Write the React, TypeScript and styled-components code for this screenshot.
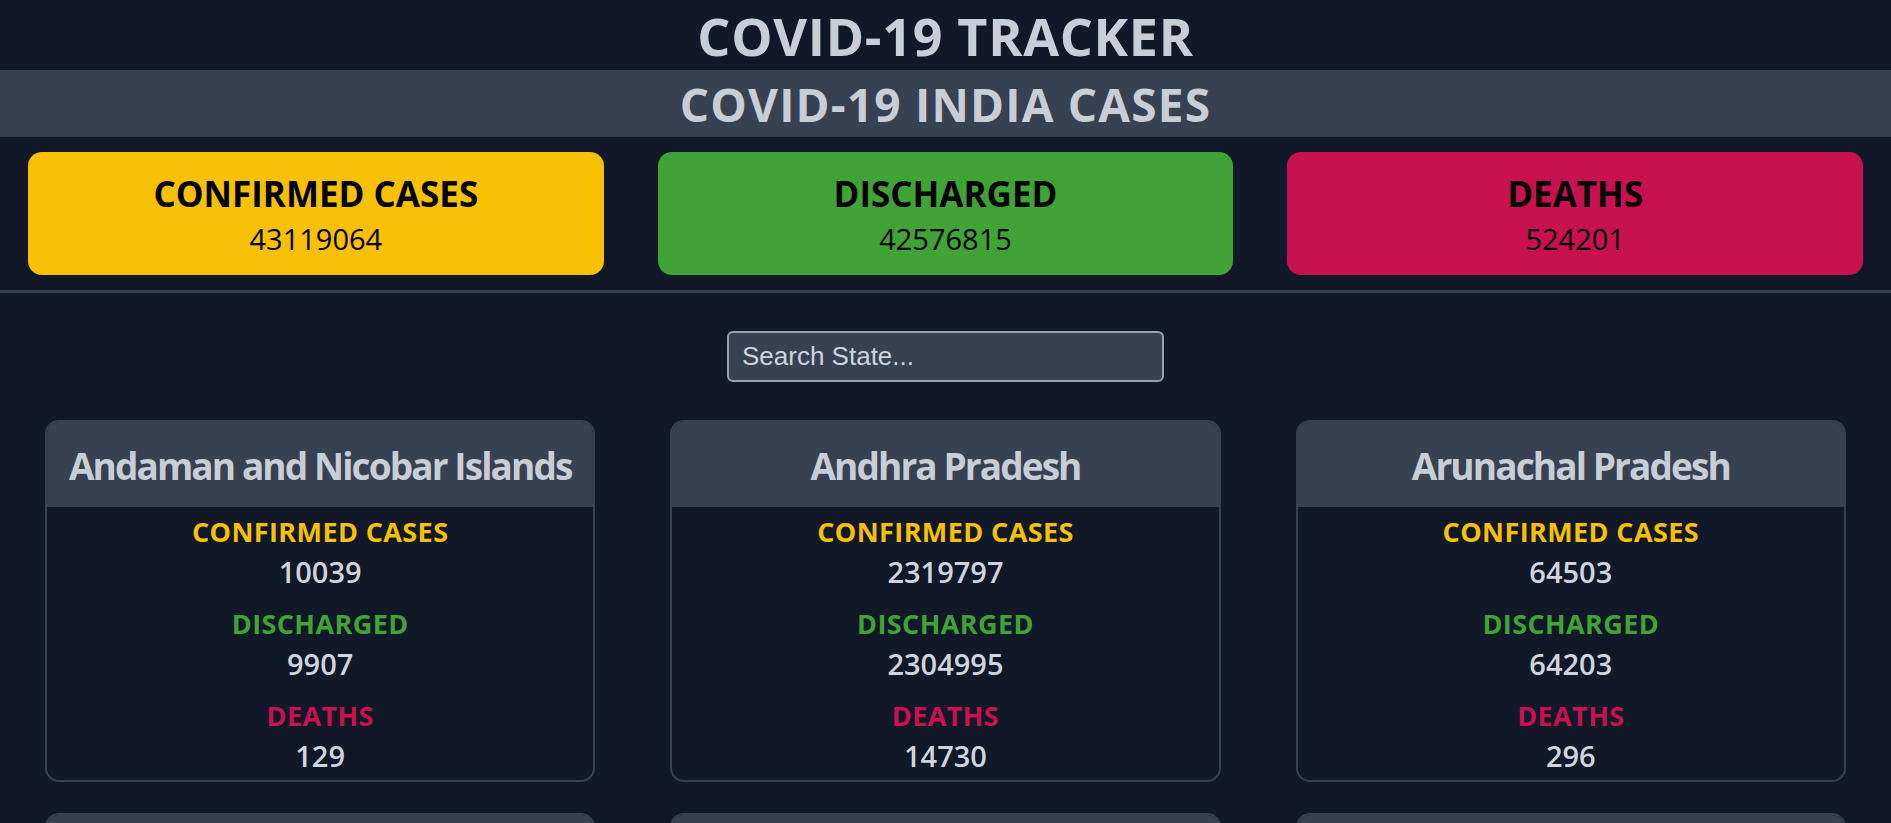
import React from "react";
import styled, { createGlobalStyle } from "styled-components";

const GlobalStyle = createGlobalStyle`
  html, body {
    margin: 0;
    padding: 0;
    background: #111827;
  }
  body {
    font-family: "Open Sans", "Noto Sans", sans-serif;
    color: #d1d5db;
  }
  * { box-sizing: border-box; }
`;

const Page = styled.div`
  min-height: 100vh;
  background: #111827;
`;

const Title = styled.h1`
  margin: 0;
  height: 70px;
  padding-top: 2px;
  line-height: 68px;
  font-size: 52px;
  letter-spacing: 0.7px;
  font-weight: 700;
  text-align: center;
  color: #c9cdd5;
`;

const SubBar = styled.div`
  background: #374151;
  height: 67px;
  padding-top: 2px;
`;

const SubTitle = styled.h2`
  margin: 0;
  line-height: 65px;
  font-size: 46px;
  letter-spacing: 1.2px;
  font-weight: 700;
  text-align: center;
  color: #c9cdd5;
`;

const SummaryRow = styled.div`
  display: grid;
  grid-template-columns: repeat(3, 1fr);
  gap: 54px;
  padding: 15px 28px;
`;

const SummaryCard = styled.div<{ $bg: string }>`
  background: ${(p) => p.$bg};
  height: 123px;
  border-radius: 14px;
  display: flex;
  flex-direction: column;
  align-items: center;
  padding: 22px 0 16px;
  gap: 5px;
  color: #000;
`;

const SummaryLabel = styled.div`
  font-size: 35px;
  line-height: 40px;
  font-weight: 700;
`;

const SummaryValue = styled.div`
  font-size: 29px;
  line-height: 40px;
  font-weight: 400;
`;

const Divider = styled.hr`
  margin: 0;
  border: none;
  height: 3px;
  background: #374151;
`;

const SearchWrap = styled.div`
  display: flex;
  justify-content: center;
  padding: 38px 0 38px;
`;

const SearchInput = styled.input`
  width: 437px;
  height: 51px;
  background: #374151;
  border: 2px solid #9aa1ad;
  border-radius: 6px;
  padding: 0 13px;
  font-family: "Liberation Sans", Arial, sans-serif;
  font-size: 26px;
  color: #d1d5db;
  outline: none;
  &::placeholder {
    color: #cfd4dc;
  }
`;

const StateGrid = styled.div`
  display: grid;
  grid-template-columns: repeat(3, 1fr);
  column-gap: 75px;
  row-gap: 31px;
  padding: 0 45px 40px;
`;

const StateCard = styled.div`
  border: 2px solid #374151;
  border-radius: 14px;
  overflow: hidden;
`;

const StateHeader = styled.div`
  background: #374151;
  height: 85px;
  padding-top: 19px;
  text-align: center;
`;

const StateName = styled.h3`
  margin: 0;
  font-size: 37px;
  line-height: 50px;
  letter-spacing: -1.9px;
  white-space: nowrap;
  font-weight: 700;
  color: #c9cdd5;
`;

const StateBody = styled.div`
  display: flex;
  flex-direction: column;
  align-items: center;
  padding: 7px 0 6px;
`;

const StatLabel = styled.div<{ $color: string; $first?: boolean }>`
  color: ${(p) => p.$color};
  font-size: 27px;
  line-height: 36px;
  letter-spacing: 0.4px;
  font-weight: 700;
  margin-top: ${(p) => (p.$first ? "0" : "16px")};
`;

const StatValue = styled.div`
  margin-top: 4px;
  font-size: 29px;
  line-height: 36px;
  font-weight: 600;
  color: #d1d5db;
`;

const YELLOW = "#f6c105";
const GREEN = "#40a335";
const RED = "#c8124f";

type StateData = { name: string; confirmed: number; discharged: number; deaths: number };

const states: StateData[] = [
  { name: "Andaman and Nicobar Islands", confirmed: 10039, discharged: 9907, deaths: 129 },
  { name: "Andhra Pradesh", confirmed: 2319797, discharged: 2304995, deaths: 14730 },
  { name: "Arunachal Pradesh", confirmed: 64503, discharged: 64203, deaths: 296 },
  { name: "Assam", confirmed: 724239, discharged: 716210, deaths: 6639 },
  { name: "Bihar", confirmed: 830508, discharged: 818227, deaths: 12256 },
  { name: "Chandigarh", confirmed: 92016, discharged: 90836, deaths: 1165 },
];

export default function App() {
  return (
    <Page>
      <GlobalStyle />
      <Title>COVID-19 TRACKER</Title>
      <SubBar>
        <SubTitle>COVID-19 INDIA CASES</SubTitle>
      </SubBar>
      <SummaryRow>
        <SummaryCard $bg={YELLOW}>
          <SummaryLabel>CONFIRMED CASES</SummaryLabel>
          <SummaryValue>43119064</SummaryValue>
        </SummaryCard>
        <SummaryCard $bg={GREEN}>
          <SummaryLabel>DISCHARGED</SummaryLabel>
          <SummaryValue>42576815</SummaryValue>
        </SummaryCard>
        <SummaryCard $bg={RED}>
          <SummaryLabel>DEATHS</SummaryLabel>
          <SummaryValue>524201</SummaryValue>
        </SummaryCard>
      </SummaryRow>
      <Divider />
      <SearchWrap>
        <SearchInput type="text" placeholder="Search State..." />
      </SearchWrap>
      <StateGrid>
        {states.map((s) => (
          <StateCard key={s.name}>
            <StateHeader>
              <StateName>{s.name}</StateName>
            </StateHeader>
            <StateBody>
              <StatLabel $color={YELLOW} $first>CONFIRMED CASES</StatLabel>
              <StatValue>{s.confirmed}</StatValue>
              <StatLabel $color={GREEN}>DISCHARGED</StatLabel>
              <StatValue>{s.discharged}</StatValue>
              <StatLabel $color={RED}>DEATHS</StatLabel>
              <StatValue>{s.deaths}</StatValue>
            </StateBody>
          </StateCard>
        ))}
      </StateGrid>
    </Page>
  );
}
